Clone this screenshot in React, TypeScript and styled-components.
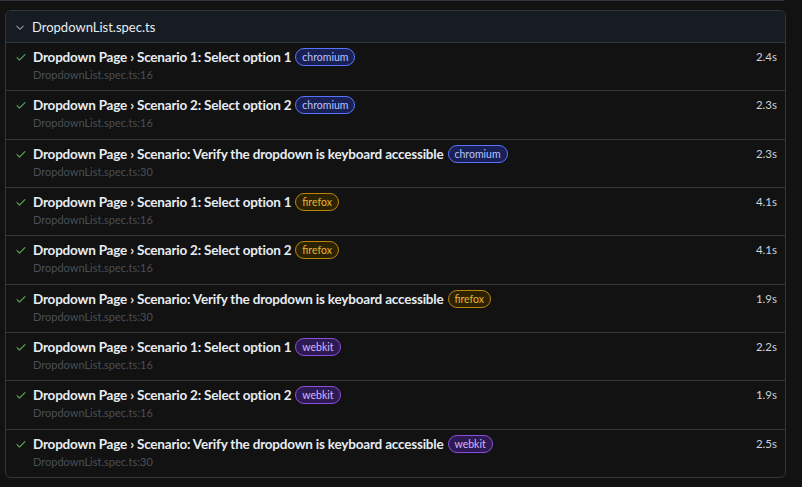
import React from "react";
import styled, { createGlobalStyle } from "styled-components";

const Global = createGlobalStyle`
  html, body { margin: 0; padding: 0; background: #121212; }
  body { font-family: Lato, "Noto Sans", sans-serif; color: #e6edf3; }
`;

const Page = styled.div`
  width: 802px;
  height: 487px;
  overflow: hidden;
  background: #121212;
  display: flex;
  flex-direction: column;
`;

const TopRule = styled.div`
  height: 1px;
  width: 784px;
  background: #30363d;
  flex: none;
`;

const Card = styled.div`
  margin: 9px 0 0 5px;
  width: 779px;
  border: 1px solid #30363d;
  border-radius: 6px;
  overflow: hidden;
  background: #121212;
`;

const Header = styled.div`
  height: 31px;
  display: flex;
  align-items: center;
  gap: 6px;
  padding-left: 8px;
  background: #171b22;
  border-bottom: 1px solid #30363d;
  font-size: 13px;
  color: #e6edf3;
`;

const Row = styled.div`
  height: 47.33px;
  display: flex;
  align-items: flex-start;
  padding: 0 8px 0 9px;
  border-bottom: 1px solid #30363d;
  &:last-child { border-bottom: none; }
`;

const Check = styled.div`
  width: 12px;
  height: 20px;
  margin-top: 4px;
  margin-right: 6px;
  display: flex;
  align-items: center;
  color: #57ab5a;
`;

const Body = styled.div`
  flex: 1;
  display: flex;
  flex-direction: column;
`;

const TitleLine = styled.div`
  margin-top: 4px;
  height: 20px;
  display: flex;
  align-items: center;
  gap: 4px;
  font-size: 13.5px;
  letter-spacing: -0.2px;
  font-weight: 700;
  color: #e6edf3;
  white-space: nowrap;
`;

const Path = styled.div`
  height: 16px;
  line-height: 16px;
  font-size: 11px;
  color: #484f58;
`;

const badgeColors = {
  chromium: { border: "#5a73ff", bg: "#1b2054", fg: "#b4c3ff" },
  firefox: { border: "#b8860b", bg: "#2d2200", fg: "#e8b339" },
  webkit: { border: "#8a4fe0", bg: "#2e1a52", fg: "#d8b4ff" },
} as const;

type Browser = keyof typeof badgeColors;

const Badge = styled.span<{ $b: Browser }>`
  display: inline-flex;
  align-items: center;
  height: 16px;
  padding: 0 6px;
  border-radius: 9px;
  font-size: 10.5px;
  letter-spacing: 0;
  font-weight: 400;
  border: 1px solid ${(p) => badgeColors[p.$b].border};
  background: ${(p) => badgeColors[p.$b].bg};
  color: ${(p) => badgeColors[p.$b].fg};
`;

const Duration = styled.div`
  margin-top: 4px;
  height: 20px;
  line-height: 20px;
  font-size: 11.5px;
  color: #c9d1d9;
`;

const CheckIcon = () => (
  <svg width="12" height="12" viewBox="0 0 16 16" fill="currentColor">
    <path d="M13.78 4.22a.75.75 0 0 1 0 1.06l-7.25 7.25a.75.75 0 0 1-1.06 0L2.22 9.28a.75.75 0 0 1 1.06-1.06L6 10.94l6.72-6.72a.75.75 0 0 1 1.06 0Z" />
  </svg>
);

const Chevron = () => (
  <svg width="12" height="12" viewBox="0 0 16 16" fill="#8b949e">
    <path d="M12.78 6.22a.75.75 0 0 1 0 1.06l-4.25 4.25a.75.75 0 0 1-1.06 0L3.22 7.28a.75.75 0 0 1 1.06-1.06L8 9.94l3.72-3.72a.75.75 0 0 1 1.06 0Z" />
  </svg>
);

const tests: { title: string; line: number; b: Browser; d: string }[] = [
  { title: "Scenario 1: Select option 1", line: 16, b: "chromium", d: "2.4s" },
  { title: "Scenario 2: Select option 2", line: 16, b: "chromium", d: "2.3s" },
  { title: "Scenario: Verify the dropdown is keyboard accessible", line: 30, b: "chromium", d: "2.3s" },
  { title: "Scenario 1: Select option 1", line: 16, b: "firefox", d: "4.1s" },
  { title: "Scenario 2: Select option 2", line: 16, b: "firefox", d: "4.1s" },
  { title: "Scenario: Verify the dropdown is keyboard accessible", line: 30, b: "firefox", d: "1.9s" },
  { title: "Scenario 1: Select option 1", line: 16, b: "webkit", d: "2.2s" },
  { title: "Scenario 2: Select option 2", line: 16, b: "webkit", d: "1.9s" },
  { title: "Scenario: Verify the dropdown is keyboard accessible", line: 30, b: "webkit", d: "2.5s" },
];

export default function App() {
  return (
    <Page>
      <Global />
      <TopRule />
      <Card>
        <Header>
          <Chevron />
          <span>DropdownList.spec.ts</span>
        </Header>
        {tests.map((t, i) => (
          <Row key={i}>
            <Check>
              <CheckIcon />
            </Check>
            <Body>
              <TitleLine>
                <span>Dropdown Page › {t.title}</span>
                <Badge $b={t.b}>{t.b}</Badge>
              </TitleLine>
              <Path>DropdownList.spec.ts:{t.line}</Path>
            </Body>
            <Duration>{t.d}</Duration>
          </Row>
        ))}
      </Card>
    </Page>
  );
}
